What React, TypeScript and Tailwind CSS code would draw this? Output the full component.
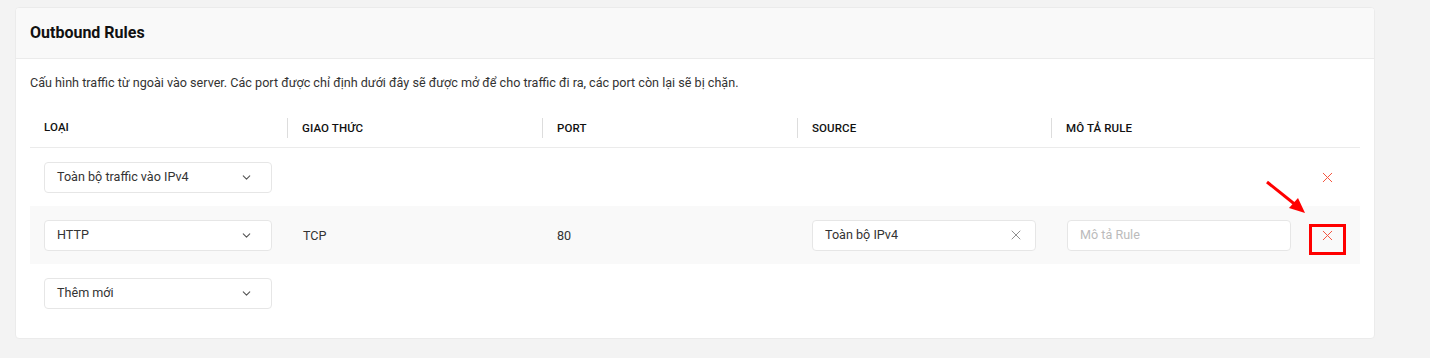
import { ChevronDown, X } from "lucide-react";

const cols = "grid grid-cols-[257px_255px_255px_254px_255px_1fr]";

function Select({ label }: { label: string }) {
    return (
        <div className="flex h-[31px] w-[228px] items-center justify-between rounded border border-[#e6e6e6] bg-white pl-3 pr-[18px] text-[#333]">
            <span>{label}</span>
            <ChevronDown size={13} strokeWidth={2} className="text-[#555]" />
        </div>
    );
}

function RemoveBtn({ marked }: { marked?: boolean }) {
    return (
        <div className="relative flex h-[30px] w-[42px] items-center justify-center">
            <X size={17} strokeWidth={1.4} className="text-[#f5533d]" />
            {marked && (
                <>
                    <div className="absolute left-[3px] top-[4px] h-[31px] w-[37px] border-[3px] border-[#ff0000]" />
                    <svg className="absolute left-[-41px] top-[-40px]" width="44" height="36" viewBox="0 0 44 36">
                        <line x1="2" y1="2" x2="32" y2="26" stroke="#ff0000" strokeWidth="3" />
                        <polygon points="40,33 24,28 33,18" fill="#ff0000" />
                    </svg>
                </>
            )}
        </div>
    );
}

export default function App() {
    return (
        <div className="min-h-[358px] bg-[#f3f3f3] pl-[15px] pt-[7px] font-['Roboto',sans-serif]">
            <div className="w-[1360px] overflow-hidden rounded border border-[#ebebeb] bg-white">
                <div className="flex h-[51px] items-center border-b border-[#ebebeb] bg-[#f9f9f9] px-[14px]">
                    <h2 className="text-[16px] font-bold text-[#111]">Outbound Rules</h2>
                </div>
                <div className="px-[14px] pb-[16px] pt-[15px] text-[12.6px]">
                    <p className="leading-[18px] text-[#333]">
                        Cấu hình traffic từ ngoài vào server. Các port được chỉ định dưới đây sẽ được mở để cho traffic đi ra, các port còn lại sẽ bị chặn.
                    </p>
                    <div className="mt-[16px]">
                        <div className={`${cols} h-[40px] items-center border-b border-[#ebebeb] text-[11.5px] font-medium tracking-[0.01em] text-[#111]`}>
                            <div className="pl-[14px]">LOẠI</div>
                            <div className="border-l border-[#ddd] pl-[14px] leading-[20px]">GIAO THỨC</div>
                            <div className="border-l border-[#ddd] pl-[14px] leading-[20px]">PORT</div>
                            <div className="border-l border-[#ddd] pl-[14px] leading-[20px]">SOURCE</div>
                            <div className="border-l border-[#ddd] pl-[14px] leading-[20px]">MÔ TẢ RULE</div>
                            <div />
                        </div>
                        <div className={`${cols} h-[58px] items-center text-[#333]`}>
                            <div className="pl-[14px]">
                                <Select label="Toàn bộ traffic vào IPv4" />
                            </div>
                            <div />
                            <div />
                            <div />
                            <div />
                            <RemoveBtn />
                        </div>
                        <div className={`${cols} h-[58px] items-center bg-[#f9f9f9] text-[#333]`}>
                            <div className="pl-[14px]">
                                <Select label="HTTP" />
                            </div>
                            <div className="pl-[16px] pt-[2px]">TCP</div>
                            <div className="pl-[15px] pt-[2px]">80</div>
                            <div className="pl-[15px]">
                                <div className="flex h-[31px] w-[224px] items-center justify-between rounded border border-[#e6e6e6] bg-white pl-3 pr-[11px]">
                                    <span>Toàn bộ IPv4</span>
                                    <X size={16} strokeWidth={1.4} className="text-[#888]" />
                                </div>
                            </div>
                            <div className="pl-[16px]">
                                <div className="flex h-[31px] w-[224px] items-center rounded border border-[#e6e6e6] bg-white pl-3 text-[#bbb]">
                                    Mô tả Rule
                                </div>
                            </div>
                            <RemoveBtn marked />
                        </div>
                        <div className={`${cols} h-[58px] items-center text-[#333]`}>
                            <div className="pl-[14px]">
                                <Select label="Thêm mới" />
                            </div>
                        </div>
                    </div>
                </div>
            </div>
        </div>
    );
}
